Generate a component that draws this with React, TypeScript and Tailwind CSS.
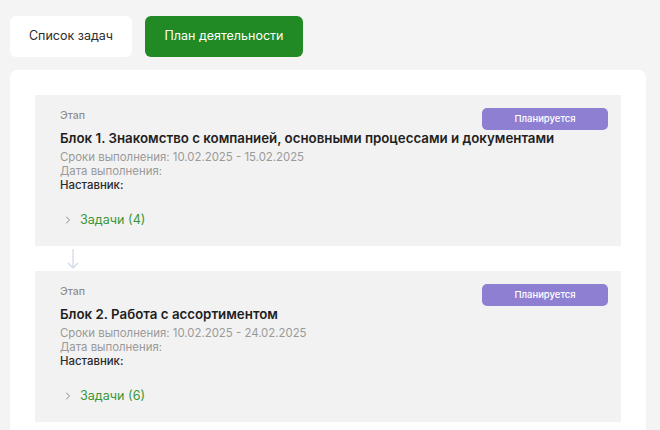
import { ChevronRight } from 'lucide-react';

interface Stage {
  title: string;
  dates: string;
  tasks: number;
}

const stages: Stage[] = [
  {
    title: 'Блок 1. Знакомство с компанией, основными процессами и документами',
    dates: '10.02.2025 - 15.02.2025',
    tasks: 4,
  },
  {
    title: 'Блок 2. Работа с ассортиментом',
    dates: '10.02.2025 - 24.02.2025',
    tasks: 6,
  },
];

const StageCard: React.FC<{ stage: Stage }> = ({ stage }) => {
  return (
    <div className="bg-[#f2f2f2] pt-[13px] pl-[25px] pr-[13px] pb-[16px]">
      <div className="flex items-start justify-between">
        <div className="text-[10.5px] leading-[16px] font-medium text-[#8f8f8f]">Этап</div>
        <div className="w-[126px] h-[22px] rounded-[5px] bg-[#8f7fd3] text-white text-[9.5px] font-medium flex items-center justify-center">
          Планируется
        </div>
      </div>
      <div className="-mt-[1px] text-[13.3px] leading-[19px] font-semibold text-[#1f1f1f]">
        {stage.title}
      </div>
      <div className="mt-[2px] text-[11.4px] leading-[14px] text-[#9a9a9a]">
        Сроки выполнения: {stage.dates}
      </div>
      <div className="text-[11.4px] leading-[14px] text-[#9a9a9a]">Дата выполнения:</div>
      <div className="text-[11.4px] leading-[15px] font-medium text-[#2a2a2a]">Наставник:</div>
      <div className="mt-[17px] flex items-center h-[20px]">
        <ChevronRight className="w-[12px] h-[12px] text-[#8a8a8a] ml-[2px]" strokeWidth={2} />
        <span className="ml-[6px] text-[12.6px] text-[#3a963a]">Задачи ({stage.tasks})</span>
      </div>
    </div>
  );
};

const Arrow = () => (
  <div className="h-[25px] pl-[32px] flex items-center">
    <svg width="12" height="22" viewBox="0 0 12 22" fill="none" stroke="#cdd6e4" strokeWidth="1.2">
      <path d="M6 1 V20" />
      <path d="M1 15 L6 20 L11 15" />
    </svg>
  </div>
);

export default function App() {
  return (
    <div
      className="h-[430px] overflow-hidden bg-[#f4f4f4] pl-[10px] pr-[14px] pt-[16px]"
      style={{ fontFamily: 'Inter, "Noto Sans", sans-serif' }}
    >
      <div className="flex gap-[13px]">
        <button className="w-[122px] h-[41px] rounded-[6px] bg-white text-[12.5px] text-[#2b2b2b]">
          Список задач
        </button>
        <button className="w-[158px] h-[41px] rounded-[6px] bg-[#228a24] text-[12.5px] text-white">
          План деятельности
        </button>
      </div>
      <div className="mt-[13px] bg-white rounded-[7px] px-[25px] pt-[25px] pb-[25px]">
        {stages.map((s, i) => (
          <div key={i}>
            {i > 0 && <Arrow />}
            <StageCard stage={s} />
          </div>
        ))}
      </div>
    </div>
  );
}
